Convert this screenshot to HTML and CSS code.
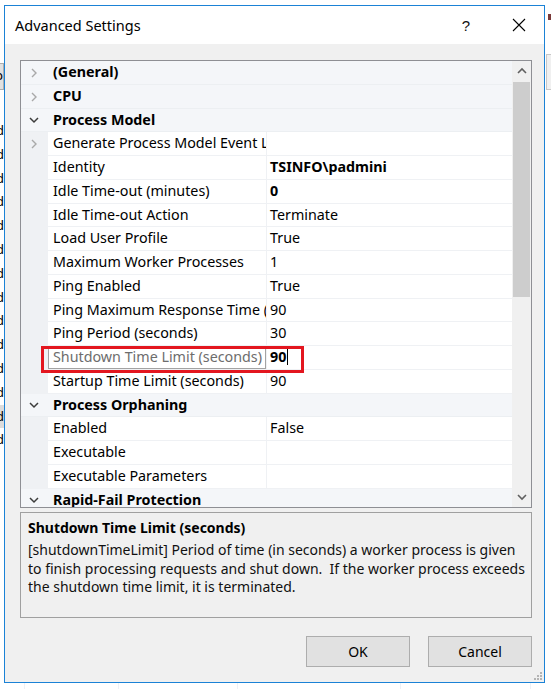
FILE: index.html
```html
<!DOCTYPE html>
<html>
<head>
<meta charset="utf-8">
<title>Advanced Settings</title>
<link rel="stylesheet" href="styles.css">
</head>
<body>
<div class="desk">
  <div class="bg-left">
    <div class="bg-tab">p</div>
    <div class="bg-col">
      <div>d</div><div>d</div><div>d</div><div>d</div><div>d</div><div>d</div><div>d</div>
      <div>d</div><div>d</div><div>d</div><div>d</div><div>d</div><div class="sel">d</div><div>d</div>
    </div>
  </div>
  <div class="bg-right"><div class="bg-mark"></div><div class="bg-box"></div></div>
  <div class="bg-bottom"><span></span><span></span><span></span><span></span><span></span></div>

  <div class="dialog">
    <div class="titlebar">
      <span class="title">Advanced Settings</span>
      <span class="help">?</span>
      <svg class="close" width="14" height="14" viewBox="0 0 14 14"><path d="M1 1 L13 13 M13 1 L1 13" stroke="#000" stroke-width="1.1" fill="none"/></svg>
    </div>
    <div class="content">
      <div class="grid">
        <div class="rows">
          <div class="row cat"><span class="gut"><svg class="chev" viewBox="0 0 10 10"><polyline points="3,1 7,5 3,9"/></svg></span><span class="catname">(General)</span></div>
          <div class="row cat"><span class="gut"><svg class="chev" viewBox="0 0 10 10"><polyline points="3,1 7,5 3,9"/></svg></span><span class="catname">CPU</span></div>
          <div class="row cat"><span class="gut"><svg class="chev open" viewBox="0 0 10 10"><polyline points="1,3 5,7 9,3"/></svg></span><span class="catname">Process Model</span></div>
          <div class="row prop"><span class="gut"><svg class="chev" viewBox="0 0 10 10"><polyline points="3,1 7,5 3,9"/></svg></span><span class="name">Generate Process Model Event Log Entry</span><span class="val"></span></div>
          <div class="row prop"><span class="gut"></span><span class="name">Identity</span><span class="val b">TSINFO\padmini</span></div>
          <div class="row prop"><span class="gut"></span><span class="name">Idle Time-out (minutes)</span><span class="val b">0</span></div>
          <div class="row prop"><span class="gut"></span><span class="name">Idle Time-out Action</span><span class="val">Terminate</span></div>
          <div class="row prop"><span class="gut"></span><span class="name">Load User Profile</span><span class="val">True</span></div>
          <div class="row prop"><span class="gut"></span><span class="name">Maximum Worker Processes</span><span class="val">1</span></div>
          <div class="row prop"><span class="gut"></span><span class="name">Ping Enabled</span><span class="val">True</span></div>
          <div class="row prop"><span class="gut"></span><span class="name">Ping Maximum Response Time (seconds)</span><span class="val">90</span></div>
          <div class="row prop"><span class="gut"></span><span class="name">Ping Period (seconds)</span><span class="val">30</span></div>
          <div class="row prop selected"><span class="gut"></span><span class="name">Shutdown Time Limit (seconds)</span><span class="val b">90<i class="caret"></i></span></div>
          <div class="row prop"><span class="gut"></span><span class="name">Startup Time Limit (seconds)</span><span class="val">90</span></div>
          <div class="row cat"><span class="gut"><svg class="chev open" viewBox="0 0 10 10"><polyline points="1,3 5,7 9,3"/></svg></span><span class="catname">Process Orphaning</span></div>
          <div class="row prop"><span class="gut"></span><span class="name">Enabled</span><span class="val">False</span></div>
          <div class="row prop"><span class="gut"></span><span class="name">Executable</span><span class="val"></span></div>
          <div class="row prop"><span class="gut"></span><span class="name">Executable Parameters</span><span class="val"></span></div>
          <div class="row cat"><span class="gut"><svg class="chev open" viewBox="0 0 10 10"><polyline points="1,3 5,7 9,3"/></svg></span><span class="catname">Rapid-Fail Protection</span></div>
        </div>
        <div class="scrollbar">
          <div class="sb-btn"><svg viewBox="0 0 10 10"><polyline points="1,7 5,3 9,7"/></svg></div>
          <div class="sb-track"><div class="sb-thumb"></div></div>
          <div class="sb-btn"><svg viewBox="0 0 10 10"><polyline points="1,3 5,7 9,3"/></svg></div>
        </div>
      </div>
      <div class="desc">
        <div class="desc-title">Shutdown Time Limit (seconds)</div>
        <div class="desc-text">[shutdownTimeLimit] Period of time (in seconds) a worker process is given<br>to finish processing requests and shut down.&nbsp; If the worker process exceeds<br>the shutdown time limit, it is terminated.</div>
      </div>
      <div class="buttons">
        <button class="btn">OK</button>
        <button class="btn">Cancel</button>
      </div>
    </div>
    <svg class="grip" width="8" height="8" viewBox="0 0 8 8"><g fill="#b4b4b4"><rect x="6" y="0" width="2" height="2"/><rect x="3" y="3" width="2" height="2"/><rect x="6" y="3" width="2" height="2"/><rect x="0" y="6" width="2" height="2"/><rect x="3" y="6" width="2" height="2"/><rect x="6" y="6" width="2" height="2"/></g></svg>
  </div>

  <div class="highlight"></div>
</div>
</body>
</html>
```

FILE: styles.css
```css
* { box-sizing: border-box; }
html, body { margin: 0; padding: 0; }
body {
  width: 551px;
  height: 689px;
  overflow: hidden;
  background: #ffffff;
  font-family: "Noto Sans", "Open Sans", sans-serif;
  color: #000;
}
.desk { position: relative; width: 551px; height: 689px; overflow: hidden; }

/* background window pieces */
.bg-left { position: absolute; left: 0; top: 0; width: 4px; height: 689px; overflow: hidden; }
.bg-tab {
  position: absolute; left: -10px; top: 63px; width: 14px; height: 27px;
  background: #e1e1e1; border: 1px solid #adadad;
  font-size: 13px; line-height: 22px; text-align: right; padding-right: 0;
}
.bg-col { position: absolute; left: -6px; top: 119px; width: 10px; font-size: 13px; }
.bg-col div { height: 23.8px; line-height: 23.8px; text-align: right; }
.bg-col .sel { background: #dcdcdc; }
.bg-right { position: absolute; left: 545px; top: 0; width: 6px; height: 689px; overflow: hidden; }
.bg-mark { position: absolute; left: 3px; top: 14px; width: 4px; height: 6px; background: #7a3a3a; }
.bg-box { position: absolute; left: 1px; top: 54px; width: 10px; height: 36px; background: #f0f0f0; border: 1px solid #c8c8c8; }
.bg-bottom { position: absolute; left: 0; top: 683px; width: 551px; height: 6px; display: flex; }
.bg-bottom span { border-left: 1px solid #eef1f6; height: 6px; }
.bg-bottom span:nth-child(1) { margin-left: 24px; }
.bg-bottom span:nth-child(2) { margin-left: 93px; }
.bg-bottom span:nth-child(3) { margin-left: 118px; }
.bg-bottom span:nth-child(4) { margin-left: 162px; }
.bg-bottom span:nth-child(5) { margin-left: 129px; }

/* dialog window */
.dialog {
  position: absolute; left: 4px; top: 5px;
  width: 541px; height: 678px;
  border: 1px solid #1b82d6;
  background: #f0f0f0;
  display: flex; flex-direction: column;
}
.titlebar {
  height: 38px; background: #ffffff;
  display: flex; align-items: center;
  padding-left: 10px;
}
.title { font-size: 14.5px; flex: 1; padding-bottom: 1px; }
.help { font-size: 15px; margin-right: 42px; font-family: "Liberation Sans", sans-serif; color: #111; }
.close { margin-right: 18px; }

.content { padding: 16px 12px 0 15px; }

/* property grid */
.grid {
  height: 448px;
  border: 1px solid #8e8f94;
  background: #ffffff;
  display: flex;
  overflow: hidden;
}
.rows { width: 491px; height: 446px; overflow: hidden; background: #eff1f4; }
.row {
  height: 23.75px;
  display: flex;
  font-size: 14.3px;
  line-height: 22.75px;
}
.gut { width: 27px; flex: none; display: flex; align-items: center; justify-content: center; height: 23.75px; padding-right: 2px; }
.chev { width: 10px; height: 10px; }
.chev polyline { fill: none; stroke: #a9a9a9; stroke-width: 1.4; }
.chev.open polyline { stroke: #3c3c3c; stroke-width: 1.5; }
.cat { background: #f4f6f9; border-bottom: 1px solid #eceff2; }
.catname { font-weight: bold; padding-left: 5px; line-height: 22.75px; }
.name {
  width: 218px; flex: none; height: 22.75px;
  background: #fff; padding-left: 5px;
  white-space: nowrap; overflow: hidden;
  margin-right: 1px;
}
.val { flex: 1; height: 22.75px; background: #fff; padding-left: 3px; white-space: nowrap; overflow: hidden; display: flex; align-items: center; }
.b { font-weight: bold; }
.selected .name { color: #6d6d6d; border: 1px solid #a3a3a3; padding-left: 4px; line-height: 20.75px; }
.caret { display: inline-block; width: 1px; height: 16px; background: #000; margin-left: 1px; }

.scrollbar { width: 19px; height: 446px; background: #f0f0f0; display: flex; flex-direction: column; }
.sb-btn { height: 20px; display: flex; align-items: center; justify-content: center; }
.sb-btn svg { width: 10px; height: 10px; }
.sb-btn polyline { fill: none; stroke: #606060; stroke-width: 1.6; }
.sb-track { flex: 1; padding: 1px 1px 0 1px; }
.sb-thumb { height: 215px; background: #cdcdcd; }

/* description */
.desc {
  margin-top: 4px;
  height: 106px;
  border: 1px solid #a0a0a0;
  background: #f0f0f0;
  padding: 5px 4px 0 7px;
}
.desc-title { font-weight: bold; font-size: 14px; line-height: 19px; }
.desc-text { font-size: 14px; line-height: 18.6px; margin-top: 4px; white-space: nowrap; color: #111; }

/* buttons */
.buttons { display: flex; justify-content: flex-end; gap: 18px; margin-top: 18px; padding-right: 0; }
.btn {
  width: 104px; height: 31px;
  background: #e1e1e1; border: 1px solid #adadad;
  font-family: "Noto Sans", "Open Sans", sans-serif;
  font-size: 14px; color: #000; padding: 0;
}

.grip { position: absolute; right: 2px; bottom: 2px; }

/* annotation */
.highlight {
  position: absolute; left: 41px; top: 346px;
  width: 263px; height: 27px;
  border: 3px solid #e3161f;
}
```
